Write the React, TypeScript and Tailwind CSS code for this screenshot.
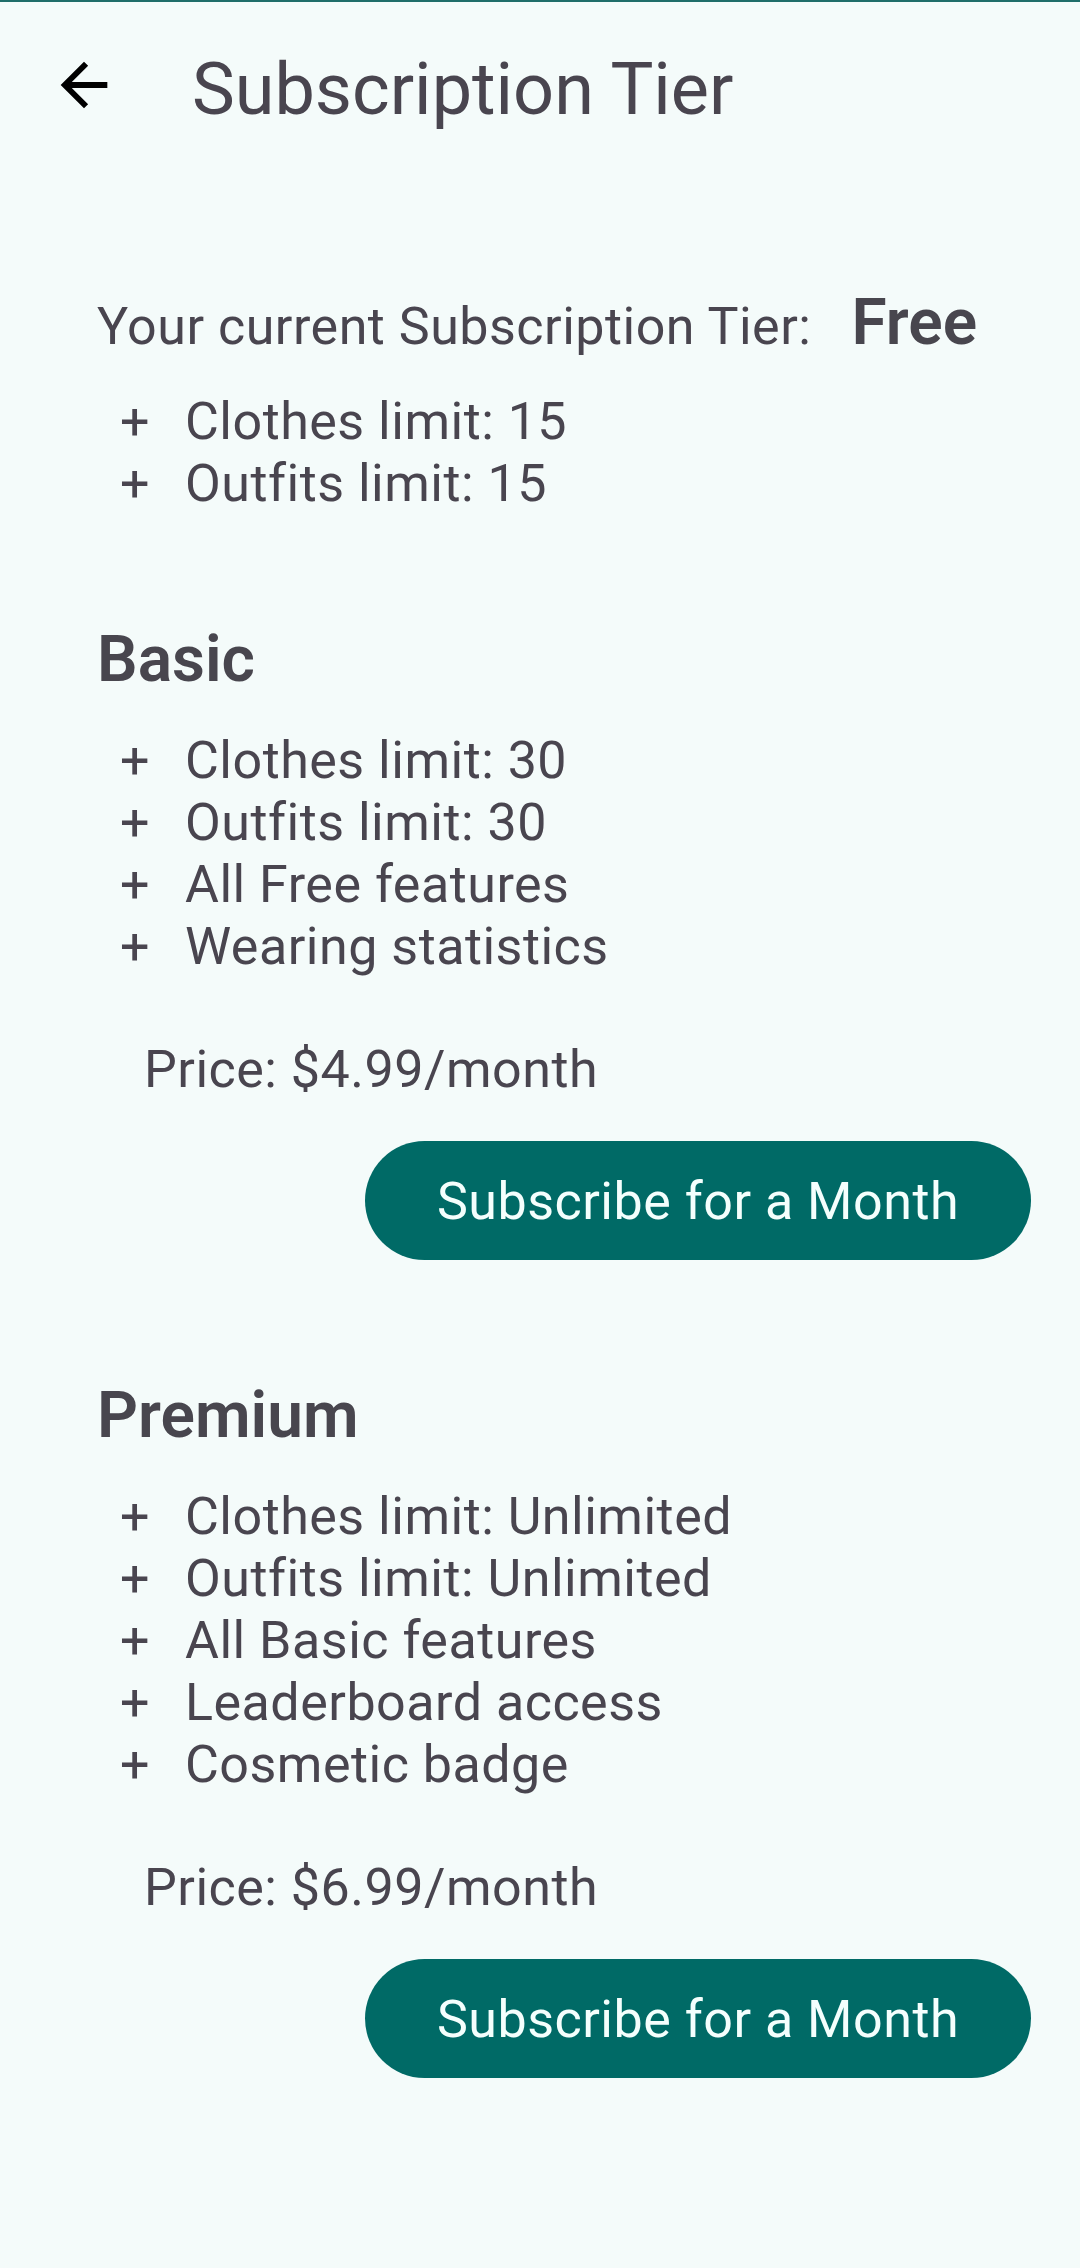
import React from 'react';

// Subscription tier screen: current plan summary plus the two paid plans.

type Plan = {
  name: string;
  features: string[];
  price: string;
};

const currentFeatures = ['Clothes limit: 15', 'Outfits limit: 15'];

const plans: Plan[] = [
  {
    name: 'Basic',
    features: ['Clothes limit: 30', 'Outfits limit: 30', 'All Free features', 'Wearing statistics'],
    price: 'Price: $4.99/month',
  },
  {
    name: 'Premium',
    features: [
      'Clothes limit: Unlimited',
      'Outfits limit: Unlimited',
      'All Basic features',
      'Leaderboard access',
      'Cosmetic badge',
    ],
    price: 'Price: $6.99/month',
  },
];

function FeatureList({ items }: { items: string[] }) {
  return (
    <ul className="flex flex-col">
      {items.map((item) => (
        <li key={item} className="flex pl-[23px] text-[52px] leading-[62px] tracking-[0.5px]">
          <span className="w-[65px]">+</span>
          <span>{item}</span>
        </li>
      ))}
    </ul>
  );
}

function PlanSection({ plan, first }: { plan: Plan; first: boolean }) {
  return (
    <section className={first ? 'mt-[107px] flex flex-col' : 'mt-[118px] flex flex-col'}>
      <h2 className="text-[64px] leading-[76px] font-semibold text-[#48464e]">{plan.name}</h2>
      <div className="mt-[32px]">
        <FeatureList items={plan.features} />
      </div>
      <p className="mt-[61px] pl-[47px] text-[52px] leading-[62px] tracking-[0.5px]">{plan.price}</p>
      <div className="mt-[40px] flex justify-end pr-[49px]">
        <button
          type="button"
          className="flex h-[119px] w-[666px] items-center justify-center rounded-full bg-[#006a66] pt-[3px] text-[52px] leading-[62px] tracking-[0.5px] text-[#f4fffd]"
        >
          Subscribe for a Month
        </button>
      </div>
    </section>
  );
}

export default function App() {
  return (
    <div className="min-h-screen w-full bg-[#f4fbfa] font-[Roboto,sans-serif] text-[#49454f]">
      <div className="h-[2px] bg-[#1f6e6a]" />

      {/* top bar */}
      <header className="mt-[46px] flex h-[84px] items-start pl-[49px]">
        <svg viewBox="0 0 24 24" className="mt-[2px] h-[70px] w-[70px] shrink-0 text-black" fill="currentColor">
          <path d="M20 11H7.83l5.59-5.59L12 4l-8 8 8 8 1.41-1.41L7.83 13H20v-2z" />
        </svg>
        <h1 className="ml-[73px] text-[72px] leading-[84px] text-[#49454f]">Subscription Tier</h1>
      </header>

      <main className="flex flex-col pl-[97px]">
        <div className="mt-[164px] flex items-baseline gap-[40px]">
          <span className="text-[52px] leading-[62px] tracking-[0.5px]">Your current Subscription Tier:</span>
          <span className="text-[64px] leading-[54px] font-semibold text-[#48464e]">Free</span>
        </div>
        <div className="mt-[33px]">
          <FeatureList items={currentFeatures} />
        </div>

        {plans.map((plan, i) => (
          <PlanSection key={plan.name} plan={plan} first={i === 0} />
        ))}
      </main>
    </div>
  );
}
